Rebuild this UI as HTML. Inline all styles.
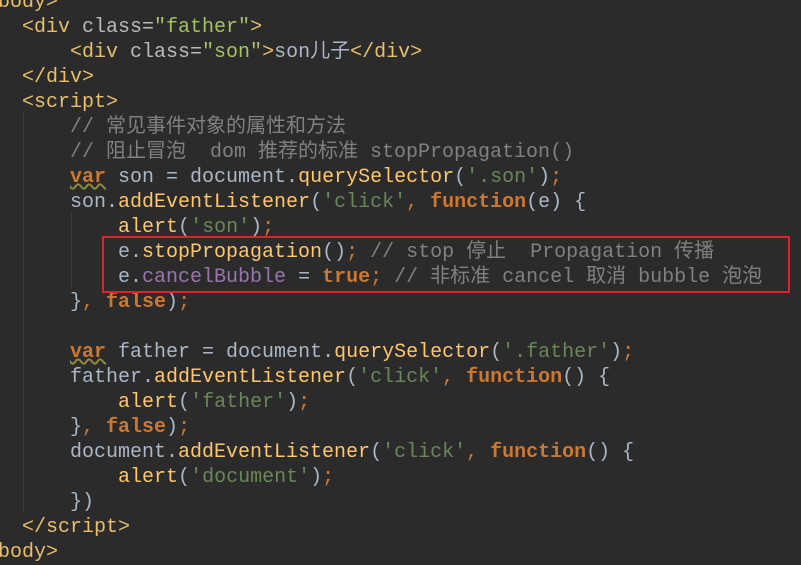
<!DOCTYPE html><html><head><meta charset="utf-8"><style>
body{margin:0;background:#2b2b2b;width:801px;height:556px;overflow:hidden;position:relative}
pre{margin:0;position:absolute;left:-2px;top:-10px;font:20px/25px "Liberation Mono","Noto Sans CJK SC",monospace;color:#a9b7c6;white-space:pre}
.t{color:#e8bf6a}.a{color:#bababa}.s{color:#a5c261}.k{color:#cc7832;font-weight:bold}.p{color:#cc7832}.f{color:#ffc66d}.j{color:#6a8759}.c{color:#808080}.v{color:#9876aa}
.w{text-decoration:underline wavy #8a8a40}
.box{position:absolute;left:102px;top:236px;width:684px;height:53px;border:2px solid #e0202a}
.g{position:absolute;width:1px;background:#3b3b3b}
</style></head><body>
<div class="g" style="left:23px;top:112px;height:400px"></div>
<div class="g" style="left:71px;top:212px;height:75px"></div>
<pre><span class="t">body&gt;</span>
  <span class="t">&lt;div </span><span class="a">class=</span><span class="s">"father"</span><span class="t">&gt;</span>
      <span class="t">&lt;div </span><span class="a">class=</span><span class="s">"son"</span><span class="t">&gt;</span>son儿子<span class="t">&lt;/div&gt;</span>
  <span class="t">&lt;/div&gt;</span>
  <span class="t">&lt;script&gt;</span>
      <span class="c">// 常见事件对象的属性和方法</span>
      <span class="c">// 阻止冒泡  dom 推荐的标准 stopPropagation()</span>
      <span class="k w">var</span> son = document.<span class="f">querySelector</span>(<span class="j">'.son'</span>)<span class="p">;</span>
      son.<span class="f">addEventListener</span>(<span class="j">'click'</span><span class="p">, </span><span class="k">function</span>(e) {
          <span class="f">alert</span>(<span class="j">'son'</span>)<span class="p">;</span>
          e.<span class="f">stopPropagation</span>()<span class="p">;</span> <span class="c">// stop 停止  Propagation 传播</span>
          e.<span class="v">cancelBubble</span> = <span class="k">true</span><span class="p">;</span> <span class="c">// 非标准 cancel 取消 bubble 泡泡</span>
      }<span class="p">, </span><span class="k">false</span>)<span class="p">;</span>

      <span class="k w">var</span> father = document.<span class="f">querySelector</span>(<span class="j">'.father'</span>)<span class="p">;</span>
      father.<span class="f">addEventListener</span>(<span class="j">'click'</span><span class="p">, </span><span class="k">function</span>() {
          <span class="f">alert</span>(<span class="j">'father'</span>)<span class="p">;</span>
      }<span class="p">, </span><span class="k">false</span>)<span class="p">;</span>
      document.<span class="f">addEventListener</span>(<span class="j">'click'</span><span class="p">, </span><span class="k">function</span>() {
          <span class="f">alert</span>(<span class="j">'document'</span>)<span class="p">;</span>
      })
  <span class="t">&lt;/script&gt;</span>
<span class="t">body&gt;</span></pre>
<div class="box"></div>
</body></html>
